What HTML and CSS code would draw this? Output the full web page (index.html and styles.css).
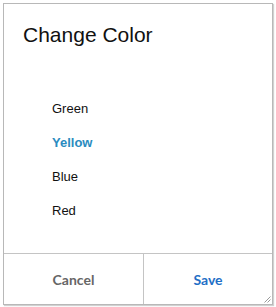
FILE: index.html
```html
<!DOCTYPE html>
<html>
<head>
<meta charset="utf-8">
<link rel="stylesheet" href="styles.css">
</head>
<body>
<div class="dialog">
  <h1 class="title">Change Color</h1>
  <ul class="options">
    <li class="option">Green</li>
    <li class="option selected">Yellow</li>
    <li class="option">Blue</li>
    <li class="option">Red</li>
  </ul>
  <div class="footer">
    <button class="btn cancel">Cancel</button>
    <button class="btn save">Save</button>
  </div>
  <svg class="grip" width="7" height="7" viewBox="0 0 7 7"><path d="M6.5 0.5 L0.5 6.5 M6.5 3.5 L3.5 6.5" stroke="#9a9a9a" stroke-width="1" fill="none"/></svg>
</div>
</body>
</html>
```
FILE: styles.css
```css
html, body {
  margin: 0;
  padding: 0;
  background: #fff;
}
body {
  padding: 3px 4px 3px 3px;
  font-family: "Liberation Sans", Arial, sans-serif;
}
.dialog {
  position: relative;
  box-sizing: border-box;
  width: 270px;
  height: 302px;
  border: 1px solid #b8b8b8;
  box-shadow: 1px 1px 1px rgba(0,0,0,0.18);
  display: flex;
  flex-direction: column;
  background: #fff;
}
.title {
  margin: 0;
  padding: 19px 0 0 19px;
  font-size: 21px;
  font-weight: normal;
  line-height: 24px;
  color: #111;
}
.options {
  list-style: none;
  margin: 0;
  padding: 45px 0 0 48px;
  flex: 1;
}
.option {
  font-size: 13px;
  line-height: 34px;
  color: #111;
}
.option.selected {
  font-weight: bold;
  color: #2a8bc0;
}
.footer {
  display: grid;
  grid-template-columns: 140px 1fr;
  height: 50px;
  border-top: 1px solid #c4c4c4;
}
.btn {
  border: 0;
  background: #fff;
  font-family: Lato, "Open Sans", sans-serif;
  font-weight: bold;
  font-size: 14px;
  padding: 0;
}
.cancel {
  color: #666;
  border-right: 1px solid #c4c4c4;
}
.save {
  color: #1f6fc6;
}
.grip {
  position: absolute;
  right: 1px;
  bottom: 1px;
}
```
